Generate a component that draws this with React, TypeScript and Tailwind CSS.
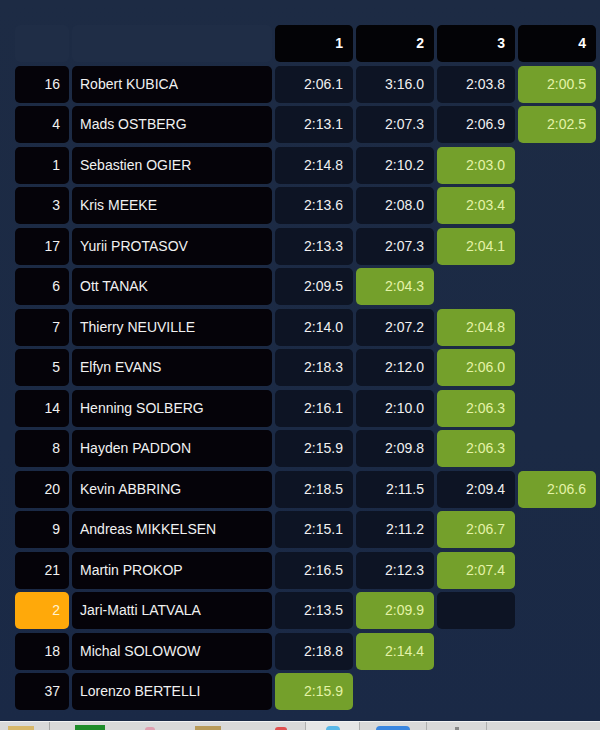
import React from "react";

type Row = {
  num: number;
  name: string;
  times: (string | null)[];
  best: number;
  current?: boolean;
};

const ROWS: Row[] = [
  { num: 16, name: "Robert KUBICA", times: ["2:06.1", "3:16.0", "2:03.8", "2:00.5"], best: 3 },
  { num: 4, name: "Mads OSTBERG", times: ["2:13.1", "2:07.3", "2:06.9", "2:02.5"], best: 3 },
  { num: 1, name: "Sebastien OGIER", times: ["2:14.8", "2:10.2", "2:03.0"], best: 2 },
  { num: 3, name: "Kris MEEKE", times: ["2:13.6", "2:08.0", "2:03.4"], best: 2 },
  { num: 17, name: "Yurii PROTASOV", times: ["2:13.3", "2:07.3", "2:04.1"], best: 2 },
  { num: 6, name: "Ott TANAK", times: ["2:09.5", "2:04.3"], best: 1 },
  { num: 7, name: "Thierry NEUVILLE", times: ["2:14.0", "2:07.2", "2:04.8"], best: 2 },
  { num: 5, name: "Elfyn EVANS", times: ["2:18.3", "2:12.0", "2:06.0"], best: 2 },
  { num: 14, name: "Henning SOLBERG", times: ["2:16.1", "2:10.0", "2:06.3"], best: 2 },
  { num: 8, name: "Hayden PADDON", times: ["2:15.9", "2:09.8", "2:06.3"], best: 2 },
  { num: 20, name: "Kevin ABBRING", times: ["2:18.5", "2:11.5", "2:09.4", "2:06.6"], best: 3 },
  { num: 9, name: "Andreas MIKKELSEN", times: ["2:15.1", "2:11.2", "2:06.7"], best: 2 },
  { num: 21, name: "Martin PROKOP", times: ["2:16.5", "2:12.3", "2:07.4"], best: 2 },
  { num: 2, name: "Jari-Matti LATVALA", times: ["2:13.5", "2:09.9", ""], best: 1, current: true },
  { num: 18, name: "Michal SOLOWOW", times: ["2:18.8", "2:14.4"], best: 1 },
  { num: 37, name: "Lorenzo BERTELLI", times: ["2:15.9"], best: 0 },
];

const LAPS = [1, 2, 3, 4];

function TimeCell({ value, best }: { value: string | null | undefined; best: boolean }) {
  if (value === undefined || value === null) return <div />;
  if (best) {
    return (
      <div className="h-[37px] rounded-[5px] bg-[#74a02b] flex items-center justify-end pr-[10px] text-[#e4f3a8]">
        {value}
      </div>
    );
  }
  return (
    <div className="h-[37px] rounded-[5px] bg-[#0d1424] flex items-center justify-end pr-[10px] text-[#f1f1f1]">
      {value}
    </div>
  );
}

export default function App() {
  return (
    <div
      className="w-[600px] h-[730px] overflow-hidden flex flex-col bg-[linear-gradient(180deg,#1d2b44_0%,#1b2a45_60%,#1a2946_100%)]"
      style={{ fontFamily: '"Liberation Sans", Arial, sans-serif' }}
    >
      <div className="flex-1 pt-[25px] pl-[15px]">
        <div className="grid grid-cols-[54px_200px_78px_78px_78px_78px] gap-x-[3px] gap-y-[3.5px] text-[14px]">
          {/* header */}
          <div className="h-[37px] rounded-[5px] bg-[#1f2d46]" />
          <div className="h-[37px] rounded-[5px] bg-[#1f2d46]" />
          {LAPS.map((l) => (
            <div
              key={l}
              className="h-[37px] rounded-[5px] bg-[#030306] flex items-center justify-end pr-[10px] font-bold text-white text-[14px]"
            >
              {l}
            </div>
          ))}

          {ROWS.map((r) => (
            <React.Fragment key={r.num}>
              <div
                className={
                  r.current
                    ? "h-[37px] rounded-[5px] bg-[#ffa90a] flex items-center justify-end pr-[9px] text-[#fff3d0]"
                    : "h-[37px] rounded-[5px] bg-[#050309] flex items-center justify-end pr-[9px] text-[#f1f1f1]"
                }
              >
                {r.num}
              </div>
              <div className="h-[37px] rounded-[5px] bg-[#050309] flex items-center pl-[8px] text-[#f1f1f1]">
                {r.name}
              </div>
              {LAPS.map((_, i) => (
                <TimeCell key={i} value={r.times[i]} best={i === r.best} />
              ))}
            </React.Fragment>
          ))}
        </div>
      </div>

      {/* taskbar strip at the bottom */}
      <div className="h-[9px] bg-[#d9d9d9] border-t border-[#f2f2f2] flex items-end">
        <div className="w-[50px] h-full border-r border-[#a8a8a8] flex items-end pl-[8px]">
          <div className="w-[26px] h-[4px] bg-[#d8b86a]" />
        </div>
        <div className="w-[55px] h-full flex items-end pl-[25px]">
          <div className="w-[32px] h-[5px] bg-[#1e8c2a]" />
        </div>
        <div className="w-[90px] h-full flex items-end pl-[40px]">
          <div className="w-[10px] h-[3px] rounded-t-full bg-[#e0a0b0]" />
        </div>
        <div className="w-[70px] h-full flex items-end pl-[0px]">
          <div className="w-[26px] h-[4px] bg-[#b99b5a]" />
        </div>
        <div className="w-[40px] h-full flex items-end pl-[10px]">
          <div className="w-[12px] h-[3px] rounded-t-full bg-[#e05050]" />
        </div>
        <div className="w-[55px] h-full border-x border-[#b0b0b0] bg-[#e6e6e6] flex items-end justify-center">
          <div className="w-[14px] h-[4px] rounded-t-full bg-[#5ab8e8]" />
        </div>
        <div className="w-[67px] h-full border-r border-[#b0b0b0] flex items-end justify-center">
          <div className="w-[34px] h-[4px] rounded-t bg-[#3a86e0]" />
        </div>
        <div className="w-[60px] h-full border-r border-[#b0b0b0] flex items-end justify-center">
          <div className="w-[4px] h-[3px] bg-[#888]" />
        </div>
        <div className="flex-1 h-full" />
      </div>
    </div>
  );
}
